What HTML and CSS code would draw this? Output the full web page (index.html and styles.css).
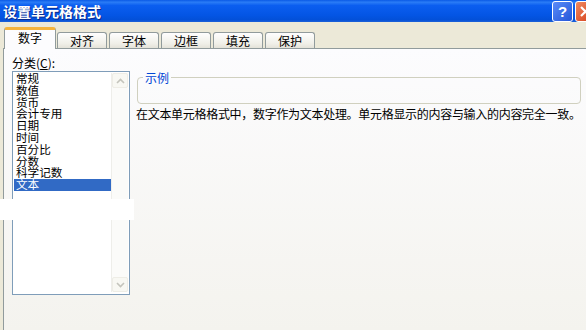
FILE: index.html
```html
<!DOCTYPE html>
<html lang="zh-CN">
<head>
    <meta charset="UTF-8">
    <title>设置单元格格式</title>
    <link rel="stylesheet" href="styles.css">
</head>
<body>
    <div class="dialog">
        <div class="titlebar">
            <span class="title">设置单元格格式</span>
            <div class="title-buttons">
                <span class="btn-help">?</span>
                <span class="btn-close">
                    <svg width="19" height="19" viewBox="0 0 19 19"><path d="M5 5 L14 14 M14 5 L5 14" stroke="#fff" stroke-width="2.2"/></svg>
                </span>
            </div>
        </div>

        <div class="tabs">
            <div class="tab active">数字</div>
            <div class="tab">对齐</div>
            <div class="tab">字体</div>
            <div class="tab">边框</div>
            <div class="tab">填充</div>
            <div class="tab">保护</div>
        </div>

        <div class="panel">
            <div class="category">
                <div class="category-label">分类(<u>C</u>):</div>
                <div class="listbox">
                    <ul class="list-items">
                        <li>常规</li>
                        <li>数值</li>
                        <li>货币</li>
                        <li>会计专用</li>
                        <li>日期</li>
                        <li>时间</li>
                        <li>百分比</li>
                        <li>分数</li>
                        <li>科学记数</li>
                        <li class="selected">文本</li>
                    </ul>
                    <div class="scrollbar">
                        <div class="scroll-btn">
                            <svg width="9" height="6" viewBox="0 0 9 6"><path d="M1 5 L4.5 1.5 L8 5" fill="none" stroke="#c4c4bc" stroke-width="1.6"/></svg>
                        </div>
                        <div class="scroll-track"></div>
                        <div class="scroll-btn">
                            <svg width="9" height="6" viewBox="0 0 9 6"><path d="M1 1 L4.5 4.5 L8 1" fill="none" stroke="#c4c4bc" stroke-width="1.6"/></svg>
                        </div>
                    </div>
                </div>
            </div>

            <div class="detail">
                <fieldset class="sample">
                    <legend>示例</legend>
                    <div class="sample-body"></div>
                </fieldset>
                <p class="description">在文本单元格格式中，数字作为文本处理。单元格显示的内容与输入的内容完全一致。</p>
            </div>
        </div>

        <div class="mask"></div>
    </div>
</body>
</html>
```

FILE: styles.css
```css
body {
    margin: 0;
    width: 586px;
    height: 330px;
    overflow: hidden;
    font-family: "Noto Sans CJK SC", "Liberation Sans", sans-serif;
    font-size: 12px;
    color: #000;
    background-color: #ece9d8;
}
.dialog {
    position: relative;
    height: 330px;
}
.titlebar {
    height: 22px;
    display: flex;
    justify-content: space-between;
    align-items: center;
    background: linear-gradient(#0a5ae6 0%, #2a7cf6 10%, #0b5ef0 25%, #0455e4 70%, #0350d8 90%, #1e62d8 100%);
}
.title {
    padding-left: 3px;
    color: #fff;
    font-weight: bold;
    font-size: 14px;
    line-height: 20px;
    text-shadow: 1px 1px 0 #0a2a8c;
}
.title-buttons {
    display: flex;
    gap: 2px;
    margin-right: -10px;
}
.btn-help, .btn-close {
    width: 19px;
    height: 19px;
    border: 1px solid #fff;
    border-radius: 3px;
    color: #fff;
    font-family: "Liberation Sans", sans-serif;
    font-weight: bold;
    font-size: 15px;
    line-height: 19px;
    text-align: center;
}
.btn-help {
    background: linear-gradient(135deg, #5a8cf8, #2456d8);
}
.btn-close {
    display: flex;
    background: linear-gradient(135deg, #f08a60, #d43c18);
}
.tabs {
    height: 26px;
    display: flex;
    align-items: flex-end;
    gap: 2px;
    padding-left: 4px;
}
.tab {
    width: 48px;
    height: 15px;
    border: 1px solid #919b9c;
    border-bottom: none;
    border-radius: 3px 3px 0 0;
    background: linear-gradient(#fefefe, #f0efe8 70%, #e4e2d8);
    text-align: center;
    line-height: 15px;
    font-size: 12px;
}
.tab.active {
    width: 50px;
    height: 19px;
    margin-bottom: -1px;
    margin-right: -1px;
    border-top: 3px solid #f5b43c;
    background: #fcfcfe;
    line-height: 16px;
    position: relative;
    z-index: 1;
}
.panel {
    margin-left: 3px;
    height: 281px;
    border-left: 1px solid #919b9c;
    border-top: 1px solid #919b9c;
    background: linear-gradient(#fcfcfe, #f4f3ee);
    display: flex;
}
.category {
    padding: 7px 0 0 8px;
}
.category-label {
    line-height: 14px;
    margin-bottom: 1px;
}
.listbox {
    width: 116px;
    height: 222px;
    border: 1px solid #7f9db9;
    background: #fff;
    display: flex;
}
.list-items {
    list-style: none;
    margin: 0;
    padding: 1px 0 0 1px;
    flex: 1;
}
.list-items li {
    height: 11.8px;
    line-height: 11.8px;
    font-size: 11.6px;
    padding-left: 2px;
    white-space: nowrap;
}
.list-items li.selected {
    background-color: #316ac5;
    color: #fff;
}
.scrollbar {
    width: 16px;
    margin: 1px 1px 2px 0;
    display: flex;
    flex-direction: column;
    background: #fbfbf9;
    border-left: 1px solid #eeeeea;
}
.scroll-btn {
    height: 13px;
    border: 1px solid #eeede6;
    border-radius: 2px;
    background: #f8f8f3;
    display: flex;
    align-items: center;
    justify-content: center;
}
.scroll-track {
    flex: 1;
}
.detail {
    padding-top: 22px;
    margin-left: 6px;
    width: 445px;
}
.sample {
    margin: 0 0 0 1px;
    padding: 0;
    border: 1px solid #d0d0bf;
    border-radius: 4px;
}
.sample legend {
    margin-left: 5px;
    padding: 0 2px;
    color: #0046d5;
    line-height: 13px;
}
.sample-body {
    height: 19px;
}
.description {
    margin: 3px 0 0 0;
    line-height: 14px;
    letter-spacing: -0.3px;
    white-space: nowrap;
}
.mask {
    position: absolute;
    left: 0;
    top: 199px;
    width: 134px;
    height: 21px;
    background: #fff;
}
```
